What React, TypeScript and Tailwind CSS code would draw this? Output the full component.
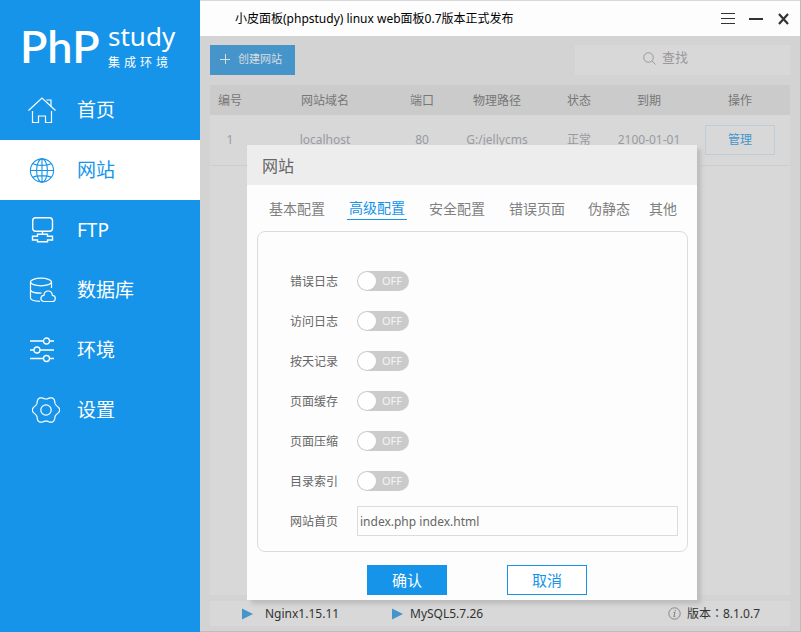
import { useState } from "react";
import type { ReactNode } from "react";

const HomeIcon = () => (
  <svg width="28" height="28" viewBox="0 0 28 28" fill="none" stroke="currentColor" strokeWidth="1.2">
    <path d="M.5 14.500 14 2l13.500 12.500" />
    <path d="M18.500 4h4.500v6" />
    <path d="M4.500 15v11.500H10.500V20h7v6.500h6V15" />
  </svg>
);

const GlobeIcon = () => (
  <svg width="28" height="28" viewBox="0 0 28 28" fill="none" stroke="currentColor" strokeWidth="1.1">
    <circle cx="14" cy="14.500" r="11.600" />
    <ellipse cx="14" cy="14.500" rx="5.400" ry="11.600" />
    <path d="M14 3v23M2.500 14.500h23M4.700 7.500c4 2.500 14.600 2.500 18.600 0M4.700 21.500c4-2.500 14.600-2.500 18.600 0" />
  </svg>
);

const FtpIcon = () => (
  <svg width="28" height="28" viewBox="0 0 28 28" fill="none" stroke="currentColor" strokeWidth="1.4">
    <rect x="4.700" y="1.700" width="19.800" height="13.600" rx="3" />
    <path d="M14.500 15.500v2.500M9.500 18.200h10v2h5v3.800h-5v1.800h-10v-1.800h-5v-3.800h5z" />
  </svg>
);

const DatabaseIcon = () => (
  <svg width="28" height="28" viewBox="0 0 28 28" fill="none" stroke="currentColor" strokeWidth="1.2">
    <ellipse cx="13" cy="6" rx="10.500" ry="3.800" />
    <path d="M2.500 6v16c0 1.700 4 3.200 9.500 3.400M23.500 6v6M2.500 14c.5 1.900 5 3.200 11 3.200" />
    <path d="M16.500 25.500c-2.300 0-3.600-1.300-3.600-3 0-1.800 1.300-3 3-3.100.2-2.700 2-4.400 4.300-4.400 2.400 0 4 1.800 4.200 4.400 1.800.2 2.900 1.400 2.900 3 0 1.800-1.300 3.100-3.200 3.100z" />
  </svg>
);

const SlidersIcon = () => (
  <svg width="28" height="28" viewBox="0 0 28 28" fill="none" stroke="currentColor" strokeWidth="1.3">
    <path d="M2 5h13.500M21.500 5H26M2 14h4M12 14h14M2 22.500h13.500M21.500 22.500H26" />
    <circle cx="18.500" cy="5" r="3" />
    <circle cx="9" cy="14" r="3" />
    <circle cx="18.500" cy="22.500" r="3" />
  </svg>
);

// Six-lobed gear outline: the radius swells once every 60 degrees.
const gearOutline = Array.from({ length: 120 }, (_, i) => {
  const angle = (i / 120) * Math.PI * 2;
  const radius = 12.3 + 1.3 * Math.cos(angle * 6);
  return `${(14 + radius * Math.cos(angle)).toFixed(2)},${(14 + radius * Math.sin(angle)).toFixed(2)}`;
}).join(" ");

const GearIcon = () => (
  <svg width="28" height="28" viewBox="0 0 28 28" fill="none" stroke="currentColor" strokeWidth="1.2">
    <circle cx="14" cy="14" r="5.200" />
    <polygon points={gearOutline} />
  </svg>
);

const navItems: { label: string; icon: ReactNode; shifted?: boolean }[] = [
  { label: "首页", icon: <HomeIcon /> },
  { label: "网站", icon: <GlobeIcon /> },
  { label: "FTP", icon: <FtpIcon /> },
  { label: "数据库", icon: <DatabaseIcon /> },
  { label: "环境", icon: <SlidersIcon /> },
  { label: "设置", icon: <GearIcon />, shifted: true },
];

function Sidebar() {
  return (
    <aside className="flex w-[200px] shrink-0 flex-col bg-[#1694e9] text-white">
      <div className="flex h-20 items-start pl-5 pt-4">
        <span className="w-[88px] font-[Lato,sans-serif] text-[45px] font-semibold leading-[60px]">PhP</span>
        <div className="flex flex-col">
          <span className="pt-1 text-[26px] leading-8">study</span>
          <span className="flex gap-1 pt-0.5 text-xs leading-[18px]">
            {["集", "成", "环", "境"].map((c) => (
              <span key={c}>{c}</span>
            ))}
          </span>
        </div>
      </div>
      <nav>
        {navItems.map((item) => (
          <a
            key={item.label}
            href="#"
            className={`flex h-[60px] items-center gap-[21px] pl-7 text-[19px] ${
              item.label === "网站" ? "bg-white text-[#1694e9]" : "text-white"
            }`}
          >
            <span className={item.shifted ? "-mr-1 pl-1" : ""}>{item.icon}</span>
            {item.label}
          </a>
        ))}
      </nav>
    </aside>
  );
}

function TitleBar() {
  return (
    <header className="flex h-9 items-center justify-between border-t border-[#d8d8d8] bg-[#fdfdfd] pl-[35px] pr-2.5">
      <h1 className="text-xs text-black">小皮面板(phpstudy) linux web面板0.7版本正式发布</h1>
      <div className="flex items-center gap-3.5 text-[#333]">
        <button aria-label="菜单">
          <svg width="14" height="12" stroke="currentColor">
            <path d="M0 .5h14M0 5.500h14M0 10.500h14" />
          </svg>
        </button>
        <button aria-label="最小化">
          <svg width="14" height="12" stroke="currentColor" strokeWidth="2">
            <path d="M0 6h14" />
          </svg>
        </button>
        <button aria-label="关闭">
          <svg width="13" height="12" stroke="currentColor" strokeWidth="2.200">
            <path d="m2 1 9 10M11 1 2 11" />
          </svg>
        </button>
      </div>
    </header>
  );
}

const columns = ["编号", "网站域名", "端口", "物理路径", "状态", "到期", "操作"];

function SiteTable() {
  return (
    <div className="flex-1 bg-[#d8d8d8]">
      <table className="w-full table-fixed text-center text-xs">
        <colgroup>
          <col className="w-10" />
          <col />
          <col className="w-11" />
          <col className="w-[106px]" />
          <col className="w-[58px]" />
          <col className="w-[82px]" />
          <col className="w-[100px]" />
        </colgroup>
        <thead>
          <tr className="h-[30px] bg-[#cbcbcb] text-[#777]">
            {columns.map((c) => (
              <th key={c} className="pt-0.5 font-normal">
                {c}
              </th>
            ))}
          </tr>
        </thead>
        <tbody>
          <tr className="h-[50px] border-b border-[#cdcdcd] text-[#999ba0]">
            <td>1</td>
            <td>localhost</td>
            <td>80</td>
            <td>G:/jellycms</td>
            <td>正常</td>
            <td>2100-01-01</td>
            <td>
              <button className="h-[30px] w-[70px] border border-[#bfcdd8] text-[#4595cb]">管理</button>
            </td>
          </tr>
        </tbody>
      </table>
    </div>
  );
}

const PlayIcon = () => (
  <svg width="12" height="12" viewBox="0 0 12 12" fill="#4595cb">
    <path d="M0 .5 11 6 0 11.500z" />
  </svg>
);

function StatusBar() {
  return (
    <footer className="flex h-[25px] items-center bg-[#d8d8d8] pl-8 pr-[30px] text-xs text-[#333]">
      <span className="flex w-[150px] items-center gap-[11px]">
        <PlayIcon />
        Nginx1.15.11
      </span>
      <span className="flex items-center gap-1.5">
        <PlayIcon />
        MySQL5.7.26
      </span>
      <span className="ml-auto flex items-center gap-1.5 font-['Noto_Sans','Noto_Sans_CJK_TC',sans-serif]">
        <svg width="13" height="13" viewBox="0 0 13 13" fill="none" stroke="#858585">
          <circle cx="6.500" cy="6.500" r="5.700" />
          <path d="M7.300 3v1.200M5.500 5.500h1.300L6 9.500h1.200" strokeWidth="1.100" />
        </svg>
        版本：8.1.0.7
      </span>
    </footer>
  );
}

const tabs = [
  { label: "基本配置", width: "w-16" },
  { label: "高级配置", width: "w-16" },
  { label: "安全配置", width: "w-16" },
  { label: "错误页面", width: "w-16" },
  { label: "伪静态", width: "w-12" },
  { label: "其他", width: "w-7" },
];

const switches = ["错误日志", "访问日志", "按天记录", "页面缓存", "页面压缩", "目录索引"];

function Switch({ id }: { id: string }) {
  const [on, setOn] = useState(false);
  return (
    <span className="relative flex">
      <input
        id={id}
        type="checkbox"
        checked={on}
        onChange={(e) => setOn(e.target.checked)}
        className="h-5 w-[52px] appearance-none rounded-full bg-[#cbcbcb] checked:bg-[#1694e9]"
      />
      <span
        className={`pointer-events-none absolute inset-0 flex items-center justify-between px-px text-[11px] text-[#f5f5f5] ${
          on ? "flex-row-reverse" : ""
        }`}
      >
        <span className="size-[18px] rounded-full bg-white" />
        <span className="px-1.5">{on ? "ON" : "OFF"}</span>
      </span>
    </span>
  );
}

function SiteDialog() {
  const [tab, setTab] = useState("高级配置");
  return (
    <div
      role="dialog"
      aria-labelledby="dialog-title"
      className="absolute left-[47px] top-[145px] w-[450px] bg-[#fdfdfd] pb-[5px] shadow-[4px_4px_4px_#bdbdbd]"
    >
      <h2 id="dialog-title" className="flex h-10 items-center bg-[#ededed] px-[15px] pt-0.5 text-base text-[#666]">
        网站
      </h2>
      <div role="tablist" className="flex h-[46px] items-center gap-4 pl-[18px] pt-0.5 text-sm">
        {tabs.map((t) => (
          <button
            key={t.label}
            role="tab"
            aria-selected={t.label === tab}
            onClick={() => setTab(t.label)}
            className={`${t.width} flex shrink-0 justify-center whitespace-nowrap`}
          >
            <span
              className={
                t.label === tab
                  ? "border-b border-[#1694e9] px-0.5 pb-px text-[#1694e9]"
                  : "text-[#808080]"
              }
            >
              {t.label}
            </span>
          </button>
        ))}
      </div>
      <div className="ml-2.5 mr-[9px] rounded-lg border border-[#dcdcdc] pb-2.5 pl-8 pr-[9px] pt-[29px] text-xs text-[#666]">
        {switches.map((s) => (
          <div key={s} className="flex h-10 items-center">
            <label htmlFor={s} className="w-[67px] pt-0.5">
              {s}
            </label>
            <Switch id={s} />
          </div>
        ))}
        <div className="flex h-10 items-center">
          <label htmlFor="index-files" className="w-[67px] pt-0.5">
            网站首页
          </label>
          <input
            id="index-files"
            type="text"
            defaultValue="index.php index.html"
            className="h-[30px] min-w-0 flex-1 border border-[#dcdcdc] bg-[#fdfdfd] px-0.5"
          />
        </div>
      </div>
      <div className="flex justify-center gap-[60px] pl-2.5 pt-[13px] text-[15px]">
        <button className="h-[30px] w-20 bg-[#1694e9] text-white">确认</button>
        <button className="h-[30px] w-20 border border-[#1694e9] bg-white text-[#1694e9]">取消</button>
      </div>
    </div>
  );
}

export default function App() {
  return (
    <div className="flex min-h-screen bg-[#d3d3d3] font-['Noto_Sans','Noto_Sans_CJK_SC',sans-serif]">
      <Sidebar />
      <main className="relative flex min-w-0 flex-1 flex-col border-b border-r border-[#bdbdbd]">
        <TitleBar />
        <div className="flex flex-1 flex-col px-2.5 pb-[5px] pt-[9px]">
          <div className="mb-2.5 flex justify-between">
            <button className="flex h-[30px] w-[85px] items-center gap-2 bg-[#4595cb] pb-0.5 pl-2.5 text-[11px] text-[#dcdcdc]">
              <svg width="10" height="10" stroke="currentColor">
                <path d="M0 5.500h10M5.500 0v10" />
              </svg>
              创建网站
            </button>
            <label className="flex h-[30px] w-[215px] items-center gap-1.5 bg-[#d8d8d8] pb-1 pl-[68px] text-[13px]">
              <svg width="13" height="13" viewBox="0 0 13 13" fill="none" stroke="#999">
                <circle cx="5.500" cy="5.500" r="4.800" />
                <path d="m9 9 3.500 3.500" />
              </svg>
              <input
                type="search"
                placeholder="查找"
                aria-label="查找"
                className="w-24 bg-transparent text-[#777] outline-none placeholder:text-[#999]"
              />
            </label>
          </div>
          <SiteTable />
          <div className="mt-1.5">
            <StatusBar />
          </div>
        </div>
        <SiteDialog />
      </main>
    </div>
  );
}
